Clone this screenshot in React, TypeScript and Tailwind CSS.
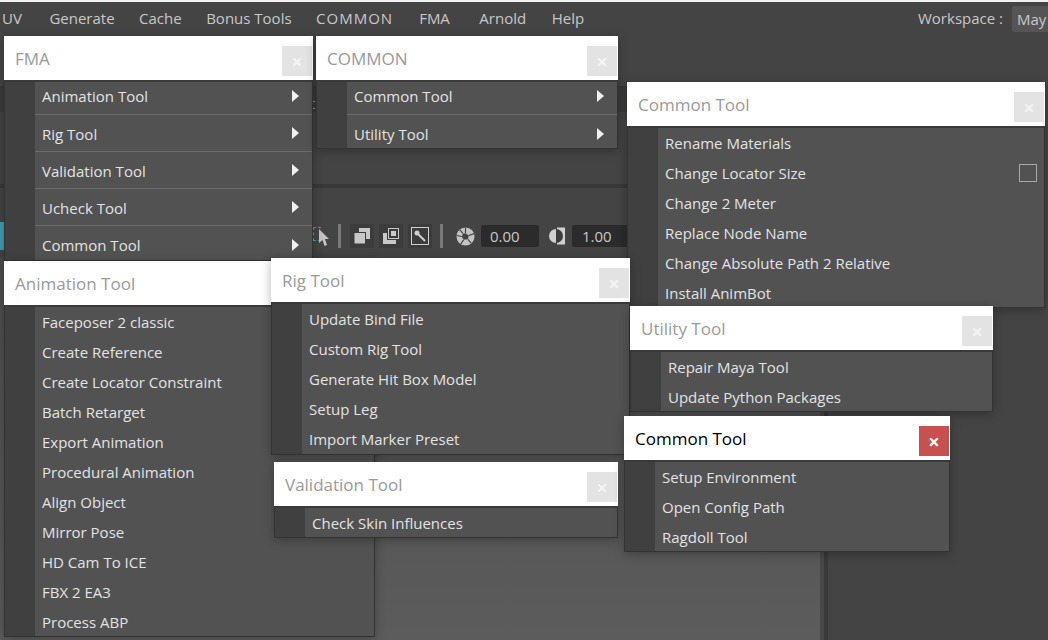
import React from "react";

const font = "font-['Open_Sans','Noto_Sans',sans-serif]";

type ItemProps = { label: string; arrow?: boolean; check?: boolean; divider?: boolean; first?: boolean; h: string };

const MenuItem = ({ label, arrow, check, divider, first, h }: ItemProps) => (
  <div className={`relative flex items-center justify-between pl-[7px] text-[15px] text-[#e3e3e3] ${arrow ? "pr-[13px]" : "pr-[7px]"} ${h} ${divider ? "border-b border-[#6b6b6b]" : ""}`}>
    <span className={`whitespace-nowrap ${arrow ? (first ? "-translate-y-[2px]" : "translate-y-[1px]") : ""}`}>{label}</span>
    {arrow && <span className={`h-0 w-0 border-y-[6px] border-l-[7px] border-y-transparent border-l-[#f0f0f0] ${first ? "-translate-y-[2px]" : ""}`} />}
    {check && <span className="h-[18px] w-[18px] border border-[#a8a8a8]" />}
  </div>
);

type MenuWindowProps = {
  title: string;
  items: string[];
  pos: string;
  active?: boolean;
  arrows?: boolean;
  checkAt?: number;
  bodyH: string;
};

// one torn-off menu: white title bar with close box, then the dark item list
const MenuWindow = ({ title, items, pos, active, arrows, checkAt, bodyH }: MenuWindowProps) => (
  <div className={`absolute flex flex-col shadow-[0_2px_10px_rgba(0,0,0,0.28)] ${pos}`}>
    <div className="flex h-[44px] shrink-0 items-start justify-between bg-white pl-[11px] pr-[1px]">
      <span className={`mt-[10px] text-[17px] leading-[26px] ${active ? "text-black" : "text-[#9a9a9a]"}`}>{title}</span>
      <span className={`mt-[10px] flex h-[30px] w-[30px] items-center justify-center pt-[1px] text-[20px] font-bold leading-none ${active ? "bg-[#c75050] text-white" : "bg-[#e3e3e3] text-[#f4f4f4]"}`}>×</span>
    </div>
    <div className={`flex overflow-hidden border border-t-2 border-[#333333] border-t-[#3a3a3a] bg-[#404040] ${bodyH}`}>
      <div className="w-[30px] shrink-0" />
      <div className="flex-1 bg-[#525252]">
        {items.map((label, i) => (
          <MenuItem
            key={label}
            label={label}
            arrow={arrows}
            first={i === 0}
            divider={arrows && i < items.length - 1}
            check={checkAt === i}
            h={arrows ? (i === 0 ? "h-[33px]" : "h-[37px]") : "h-[30px]"}
          />
        ))}
      </div>
    </div>
  </div>
);

const menuBar = [
  { label: "UV", cls: "ml-[2px]" },
  { label: "Generate", cls: "ml-[27.5px]" },
  { label: "Cache", cls: "ml-[24.5px]" },
  { label: "Bonus Tools", cls: "ml-[24.5px]" },
  { label: "COMMON", cls: "ml-[24.5px] tracking-[1px]" },
  { label: "FMA", cls: "ml-[26px]" },
  { label: "Arnold", cls: "ml-[29.5px]" },
  { label: "Help", cls: "ml-[25.5px]" },
];

const ToolIcon = ({ children }: { children: React.ReactNode }) => (
  <span className="flex h-[24px] w-[24px] shrink-0 items-center justify-center bg-[#3c3c3c]">
    <svg width="20" height="20" viewBox="0 0 20 20">{children}</svg>
  </span>
);

const Divider = ({ cls }: { cls: string }) => <span className={`h-[24px] w-[3px] shrink-0 bg-[#7a7a7a] ${cls}`} />;

export default function App() {
  return (
    <div className={`relative h-[640px] w-[1048px] overflow-hidden bg-[#444444] ${font}`}>
      <div className="h-[2px] bg-[#f2f2f2]" />
      {/* maya menu bar */}
      <div className="flex h-[33px] items-center justify-between bg-[#444444] text-[15px] text-[#c8c8c8]">
        <div className="flex">
          {menuBar.map((m) => (
            <span key={m.label} className={m.cls}>{m.label}</span>
          ))}
        </div>
        <div className="flex items-center gap-[9px]">
          <span>Workspace :</span>
          <span className="h-[26px] w-[36px] overflow-hidden rounded-l-[2px] bg-[#555555] pl-[5px] leading-[26px]">May</span>
        </div>
      </div>
      <div className="h-[51px]" />
      <div className="h-[2px] w-[627px] bg-[#383838]" />
      <div className="h-[24px] w-[627px] bg-[#3c3c3c] pl-[310px] text-[15px] leading-[30px] text-[#9a9a9a]">
        t
      </div>
      <div className="h-[72px]" />
      <div className="h-[4px] w-[627px] bg-[#383838]" />
      <div className="h-[34px]" />
      {/* viewport toolbar */}
      <div className="flex h-[28px] w-[628px] items-center">
        <span className="h-[28px] w-[4px] shrink-0 bg-[#3f9fb0]" />
        <span className="relative ml-[309px] h-[24px] w-[20px] shrink-0">
          <span className="absolute left-0 top-[3px] h-[14px] w-[8px] border border-r-0 border-dashed border-[#3aa6b5]" />
          <svg className="absolute left-0 top-0" width="20" height="24" viewBox="0 0 20 24">
            <path d="M6 5 L16 15 L12 15 L14 21 L11.5 22 L9.5 16 L6 19 Z" fill="#c4c4c4" />
          </svg>
        </span>
        <Divider cls="ml-[5px] mr-[9px]" />
        <ToolIcon>
          <rect x="7" y="2" width="11" height="11" fill="#c8c8c8" />
          <rect x="2" y="6.5" width="11.5" height="11.5" fill="#c8c8c8" stroke="#3c3c3c" />
        </ToolIcon>
        <span className="w-[5px] shrink-0" />
        <ToolIcon>
          <rect x="7.5" y="2.5" width="10" height="10" fill="none" stroke="#c8c8c8" />
          <rect x="10" y="5" width="5" height="5" fill="#c8c8c8" />
          <rect x="2" y="7" width="4" height="11" fill="#c8c8c8" />
          <rect x="2" y="14" width="13" height="4" fill="#c8c8c8" />
        </ToolIcon>
        <span className="w-[5px] shrink-0" />
        <ToolIcon>
          <rect x="1.5" y="1.5" width="17" height="17" fill="none" stroke="#d0d0d0" />
          <circle cx="7" cy="7" r="2.5" fill="#d0d0d0" />
          <path d="M8 8 L15 15" stroke="#d0d0d0" strokeWidth="2" />
        </ToolIcon>
        <Divider cls="ml-[8px] mr-[13px]" />
        <svg className="shrink-0" width="19" height="19" viewBox="0 0 20 20">
          <circle cx="10" cy="10" r="9.5" fill="#c4c4c4" />
          <path d="M10 6.5 L13.5 9 L12.5 13 L8 13.5 L6 10 L7.5 7 Z" fill="#444444" />
          <path d="M10 0.5 L10 6.5 M19 7 L13.5 9 M16 17 L12.5 13 M5 18 L8 13.5 M0.5 9 L6 10 M4 3 L7.5 7" stroke="#444444" strokeWidth="1.2" />
        </svg>
        <span className="ml-[6px] w-[58px] shrink-0 rounded-[2px] bg-[#2b2b2b] pl-[9px] text-[15px] leading-[22px] text-[#c8c8c8]">0.00</span>
        <svg className="ml-[9px] shrink-0" width="18" height="18" viewBox="0 0 18 18">
          <rect x="9" y="0.5" width="8" height="17" fill="#d0d0d0" />
          <circle cx="8" cy="9" r="7" fill="#3c3c3c" />
          <path d="M8 2 A7 7 0 0 0 8 16 Z" fill="#d0d0d0" />
        </svg>
        <span className="ml-[6px] h-[22px] flex-1 rounded-l-[2px] bg-[#2b2b2b] pl-[10px] text-[15px] leading-[22px] text-[#c8c8c8]">1.00</span>
      </div>
      <div className="h-[8px]" />
      {/* viewport and side panel */}
      <div className="flex h-[382px]">
        <div className="w-[820px] bg-[linear-gradient(to_bottom,#4c4c4c,#5c5c5c)]" />
        <div className="w-[4px] bg-[#484848]" />
        <div className="w-[4px] bg-[#393939]" />
        <div className="flex-1 bg-[#444444]" />
      </div>

      <MenuWindow pos="left-[4px] top-[36px] w-[309px]" title="FMA" arrows bodyH="h-[181px]"
        items={["Animation Tool", "Rig Tool", "Validation Tool", "Ucheck Tool", "Common Tool"]} />
      <MenuWindow pos="left-[316px] top-[36px] w-[302px]" title="COMMON" arrows bodyH="h-[69px]"
        items={["Common Tool", "Utility Tool"]} />
      <MenuWindow pos="left-[627px] top-[82px] w-[418px]" title="Common Tool" checkAt={1} bodyH="h-[182px]"
        items={["Rename Materials", "Change Locator Size", "Change 2 Meter", "Replace Node Name", "Change Absolute Path 2 Relative", "Install AnimBot"]} />
      <MenuWindow pos="left-[4px] top-[261px] w-[371px]" title="Animation Tool" bodyH="h-[332px]"
        items={["Faceposer 2 classic", "Create Reference", "Create Locator Constraint", "Batch Retarget", "Export Animation", "Procedural Animation", "Align Object", "Mirror Pose", "HD Cam To ICE", "FBX 2 EA3", "Process ABP"]} />
      <MenuWindow pos="left-[271px] top-[258px] w-[359px]" title="Rig Tool" bodyH="h-[153px]"
        items={["Update Bind File", "Custom Rig Tool", "Generate Hit Box Model", "Setup Leg", "Import Marker Preset"]} />
      <MenuWindow pos="left-[274px] top-[462px] w-[344px]" title="Validation Tool" bodyH="h-[32px]"
        items={["Check Skin Influences"]} />
      <MenuWindow pos="left-[630px] top-[306px] w-[363px]" title="Utility Tool" bodyH="h-[62px]"
        items={["Repair Maya Tool", "Update Python Packages"]} />
      <MenuWindow pos="left-[624px] top-[416px] w-[326px]" title="Common Tool" active bodyH="h-[92px]"
        items={["Setup Environment", "Open Config Path", "Ragdoll Tool"]} />
    </div>
  );
}
